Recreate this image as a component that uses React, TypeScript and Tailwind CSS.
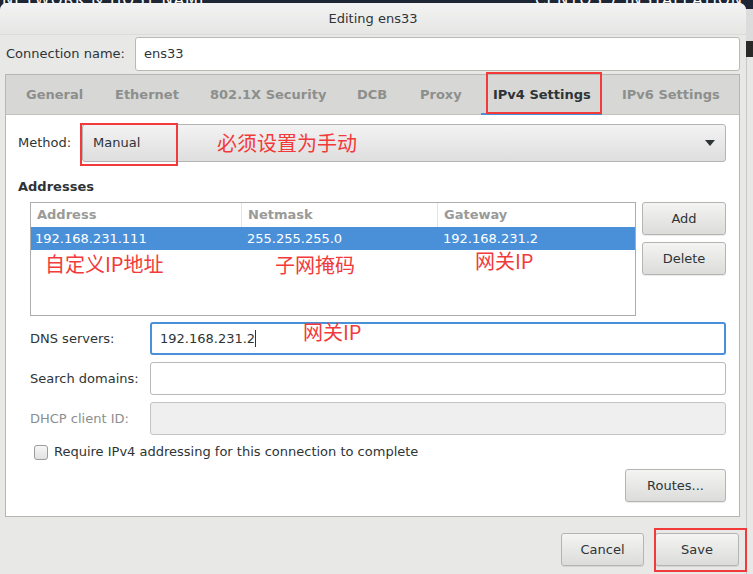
import React from 'react';

const font = { fontFamily: '"DejaVu Sans", "Noto Sans CJK SC", sans-serif' };
const cjk = { fontFamily: '"Noto Sans CJK SC", "DejaVu Sans", sans-serif' };

const tabs = [
  { label: 'General', w: 'w-[89px]' },
  { label: 'Ethernet', w: 'w-[95px]' },
  { label: '802.1X Security', w: 'w-[147px]' },
  { label: 'DCB', w: 'w-[63px]' },
  { label: 'Proxy', w: 'w-[73px]' },
  { label: 'IPv4 Settings', w: 'w-[129px]' },
  { label: 'IPv6 Settings', w: 'w-[128px]' },
];

const Button: React.FC<{ label: string; className?: string }> = ({ label, className = '' }) => (
  <div
    className={`flex items-center justify-center rounded-[3px] border border-[#b4b4b2] bg-gradient-to-b from-[#f4f4f3] to-[#dcdcdb] text-[13px] text-[#2e3436] shadow-[0_1px_0_rgba(0,0,0,0.08)] ${className}`}
  >
    {label}
  </div>
);

const Field: React.FC<{ label: string; value?: string; focused?: boolean; disabled?: boolean }> = ({
  label,
  value,
  focused,
  disabled,
}) => (
  <div className="flex items-center h-[33px]">
    <div className={`w-[120px] text-[13px] ${disabled ? 'text-[#8b8e8f]' : 'text-[#2e3436]'}`}>{label}</div>
    <div
      className={`flex-1 h-[33px] rounded-[3px] flex items-center px-[8px] text-[13px] text-[#2e3436] ${
        focused
          ? 'border-2 border-[#4a90d9] bg-white'
          : disabled
          ? 'border border-[#c4c4c2] bg-[#efefef]'
          : 'border border-[#b9b9b6] bg-white'
      }`}
    >
      {value}
      {focused && <span className="inline-block w-px h-[17px] bg-[#2e3436]" />}
    </div>
  </div>
);

export default function App() {
  return (
    <div className="relative w-[753px] h-[574px] overflow-hidden bg-[#1e2636] flex" style={font}>
      {/* installer header, cut off above the dialog */}
      <div className="absolute left-0 right-0 top-[-11px] flex justify-between px-[2px] text-[15px] text-white tracking-[1px]">
        <span>NETWORK &amp; HOST NAME</span>
        <span className="mr-[8px]">CENTOS 7 INSTALLATION</span>
      </div>

      {/* dialog */}
      <div className="relative w-[746px] flex flex-col mt-[3px] rounded-t-[7px] bg-[#e8e8e7] overflow-hidden">
        <div className="h-[32px] flex items-center justify-center bg-gradient-to-b from-[#f3f3f3] to-[#e6e6e5] text-[13px] text-[#2e3436] border-b border-[#dcdcdb]">
          Editing ens33
        </div>

        <div className="flex items-center h-[35px] mt-[1px] pl-[6px] pr-[6px]">
          <div className="w-[129px] text-[13px] text-[#2e3436]">Connection name:</div>
          <div className="flex-1 h-[34px] rounded-[3px] border border-[#b9b9b6] bg-white flex items-center px-[8px] text-[13px] text-[#2e3436]">
            ens33
          </div>
        </div>

        {/* notebook */}
        <div className="ml-[5px] mr-[6px] mt-[3px] h-[443px] border border-[#b6b6b3] flex flex-col bg-white">
          <div className="h-[40px] bg-[#d7d7d6] flex pl-[4px] border-b border-[#c2c2c0]">
            {tabs.map((t) => {
              const active = t.label === 'IPv4 Settings';
              return (
                <div
                  key={t.label}
                  className={`relative ${t.w} pl-[16px] flex items-center whitespace-nowrap text-[13px] font-bold ${
                    active ? 'text-[#2e3436]' : 'text-[#8d8f8c]'
                  }`}
                >
                  {t.label}
                  {active && <div className="absolute left-[4px] right-[4px] bottom-[-1px] h-[2px] bg-[#4a90d9]" />}
                </div>
              );
            })}
          </div>

          <div className="flex-1 flex flex-col pt-[9px] pl-[12px] pr-[13px]">
            <div className="flex items-center h-[38px]">
              <div className="w-[64px] text-[13px] text-[#2e3436]">Method:</div>
              <div className="flex-1 h-[38px] rounded-[3px] border border-[#b4b4b2] bg-gradient-to-b from-[#f3f3f3] to-[#dedede] flex items-center pl-[10px] pr-[10px] text-[13px] text-[#2e3436]">
                <span className="flex-1">Manual</span>
                <svg width="10" height="6" viewBox="0 0 10 6">
                  <path d="M0 0 L10 0 L5 6 Z" fill="#2e3436" />
                </svg>
              </div>
            </div>

            <div className="mt-[17px] text-[13px] font-bold text-[#2e3436] leading-[16px]">Addresses</div>

            <div className="flex mt-[7px] ml-[12px] gap-[6px]">
              <div className="w-[606px] h-[114px] border border-[#acacaa] bg-white flex flex-col">
                <div className="h-[24px] flex text-[13px] font-bold text-[#9a9a98]">
                  <div className="w-[211px] pl-[6px] flex items-center border-r border-[#e4e4e3]">Address</div>
                  <div className="w-[196px] pl-[6px] flex items-center border-r border-[#e4e4e3]">Netmask</div>
                  <div className="flex-1 pl-[6px] flex items-center">Gateway</div>
                </div>
                <div className="h-[23px] flex text-[13px] text-white bg-[#4a90d9]">
                  <div className="w-[211px] pl-[4px] flex items-center">192.168.231.111</div>
                  <div className="w-[196px] pl-[5px] flex items-center">255.255.255.0</div>
                  <div className="flex-1 pl-[5px] flex items-center">192.168.231.2</div>
                </div>
              </div>
              <div className="flex flex-col gap-[7px]">
                <Button label="Add" className="w-[84px] h-[33px]" />
                <Button label="Delete" className="w-[84px] h-[33px]" />
              </div>
            </div>

            <div className="mt-[6px] ml-[12px] flex flex-col gap-[7px]">
              <Field label="DNS servers:" value="192.168.231.2" focused />
              <Field label="Search domains:" />
              <Field label="DHCP client ID:" disabled />
            </div>

            <div className="mt-[9px] ml-[16px] flex items-center h-[16px] gap-[6px]">
              <div className="w-[14px] h-[15px] rounded-[3px] border border-[#9c9c9a] bg-gradient-to-b from-[#f6f6f6] to-[#e2e2e2]" />
              <span className="text-[13px] text-[#2e3436]">Require IPv4 addressing for this connection to complete</span>
            </div>

            <div className="mt-[9px] flex justify-end">
              <Button label="Routes..." className="w-[101px] h-[33px]" />
            </div>
          </div>
        </div>

        <div className="flex justify-end gap-[11px] pr-[7px] mt-[16px]">
          <Button label="Cancel" className="w-[83px] h-[33px]" />
          <Button label="Save" className="w-[84px] h-[33px]" />
        </div>
      </div>

      {/* right strip behind dialog */}
      <div className="relative flex-1 flex flex-col">
        <div className="h-[9px] bg-[#1e2636]" />
        <div className="h-[32px] bg-[#dcdcdc]" />
        <div className="h-[16px] bg-[#2a2a2a]" />
        <div className="flex-1 bg-[#e8e8e7] border-l border-[#c8c8c6]" />
      </div>

      {/* annotations */}
      <div className="absolute left-[486px] top-[72px] w-[116px] h-[42px] border-2 border-[#f23a3a]" />
      <div className="absolute left-[80px] top-[123px] w-[98px] h-[43px] border-2 border-[#f23a3a]" />
      <div className="absolute left-[654px] top-[528px] w-[93px] h-[44px] border-2 border-[#f23a3a]" />

      <div className="absolute left-[217px] top-[131px] text-[20px] leading-[24px] text-[#f23a3a]" style={cjk}>
        必须设置为手动
      </div>
      <div className="absolute left-[45px] top-[252px] text-[20px] leading-[24px] text-[#f23a3a]" style={cjk}>
        自定义IP地址
      </div>
      <div className="absolute left-[275px] top-[253px] text-[20px] leading-[24px] text-[#f23a3a]" style={cjk}>
        子网掩码
      </div>
      <div className="absolute left-[475px] top-[249px] text-[20px] leading-[24px] text-[#f23a3a]" style={cjk}>
        网关IP
      </div>
      <div className="absolute left-[303px] top-[320px] text-[20px] leading-[24px] text-[#f23a3a]" style={cjk}>
        网关IP
      </div>
    </div>
  );
}
